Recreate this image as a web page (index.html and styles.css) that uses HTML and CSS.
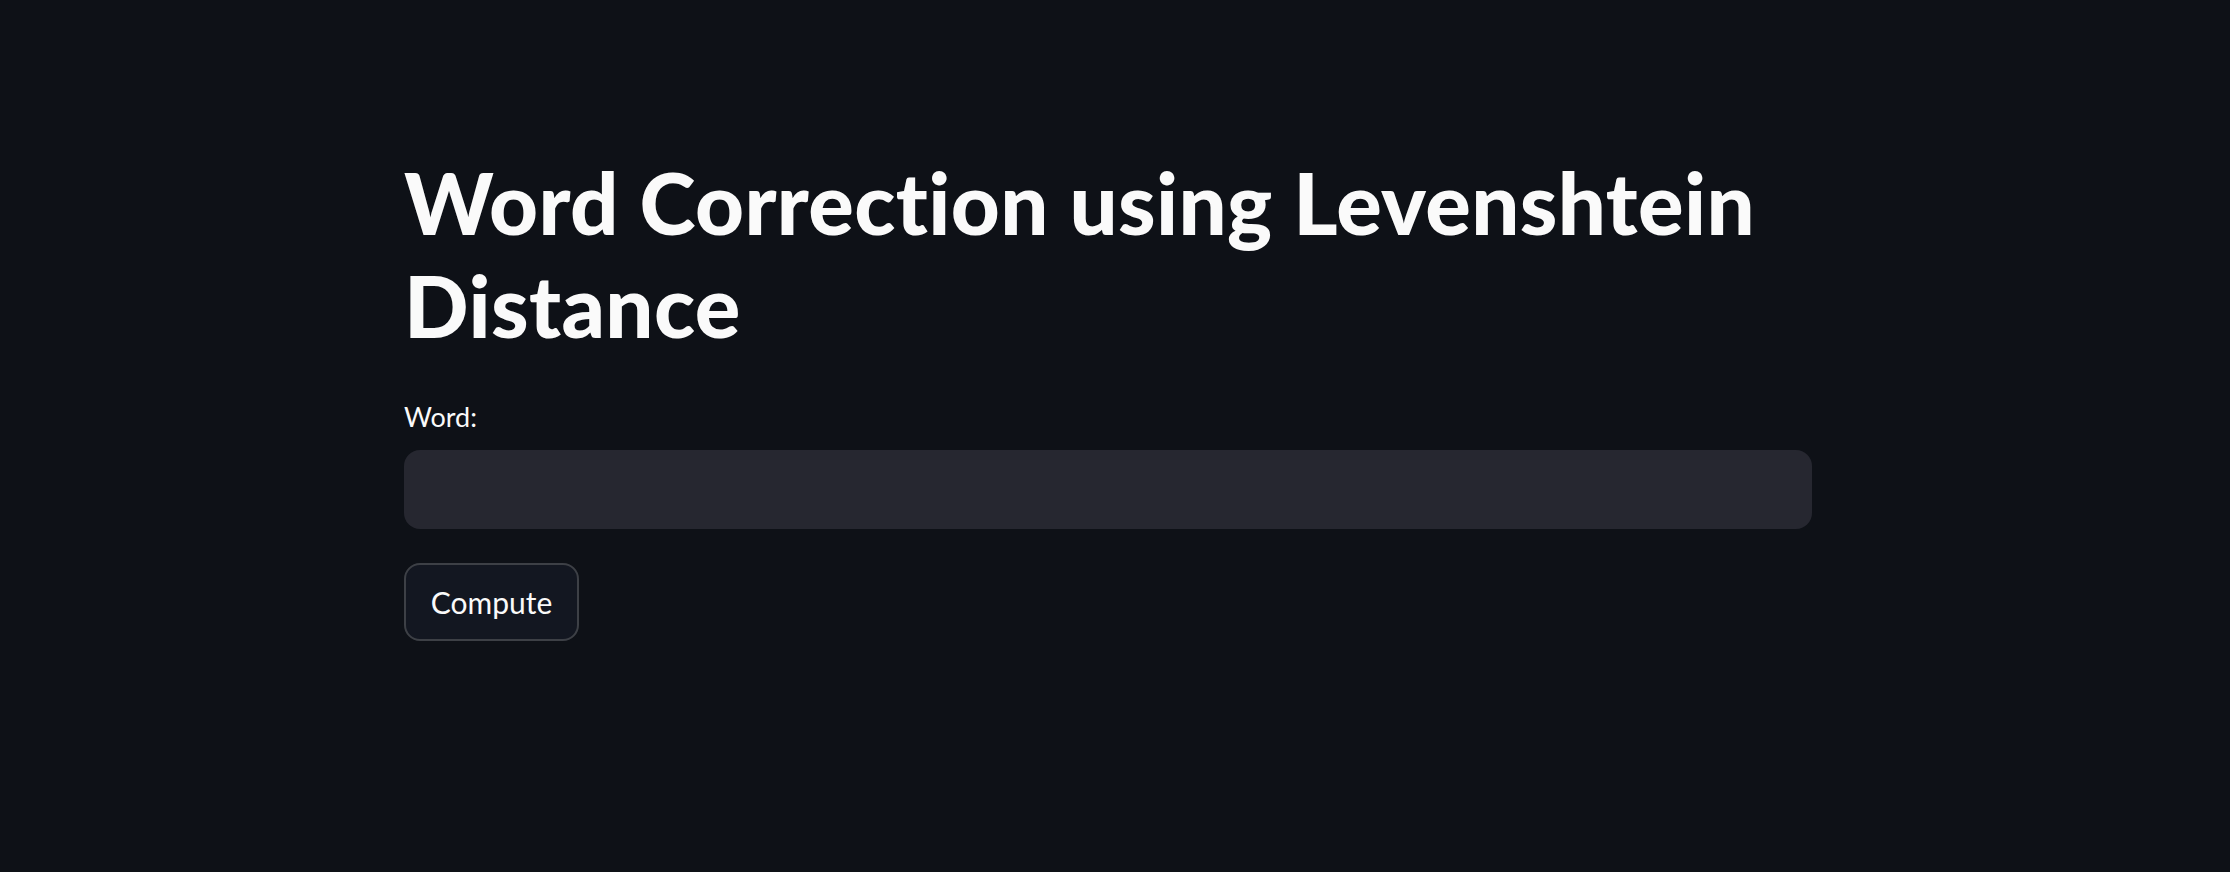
FILE: index.html
```html
<!DOCTYPE html>
<html lang="en">
<head>
<meta charset="utf-8">
<title>Word Correction using Levenshtein Distance</title>
<link rel="stylesheet" href="styles.css">
</head>
<body>
<main class="app">
  <section class="block">
    <h1 class="title">Word Correction using Levenshtein Distance</h1>
    <div class="field">
      <label class="label" for="word">Word:</label>
      <input class="input" id="word" type="text">
    </div>
    <button class="btn" type="button">Compute</button>
  </section>
</main>
</body>
</html>
```

FILE: styles.css
```css
html, body {
  margin: 0;
  padding: 0;
  background: #0e1117;
  color: #fafafa;
  font-family: Lato, "Noto Sans", sans-serif;
  font-variant-ligatures: none;
}

.app {
  min-height: 872px;
  box-sizing: border-box;
  padding: 151px 14px 0 0;
}

.block {
  width: 1408px;
  margin: 0 auto;
  display: flex;
  flex-direction: column;
  align-items: flex-start;
}

.title {
  margin: 0;
  font-size: 85px;
  line-height: 103px;
  font-weight: 900;
  letter-spacing: 0.4px;
  color: #fafafa;
}

.field {
  width: 100%;
  margin-top: 38px;
  display: flex;
  flex-direction: column;
}

.label {
  font-size: 27px;
  line-height: 44px;
  color: #fafafa;
}

.input {
  margin-top: 11px;
  height: 79px;
  box-sizing: border-box;
  border: none;
  border-radius: 16px;
  background: #262730;
  color: #fafafa;
  font: inherit;
  font-size: 32px;
  padding: 0 24px;
  outline: none;
}

.btn {
  margin-top: 34px;
  height: 78px;
  min-width: 175px;
  box-sizing: border-box;
  padding: 0 24px;
  border: 2px solid #3d4046;
  border-radius: 16px;
  background: #131721;
  color: #fafafa;
  font-family: inherit;
  font-size: 30px;
  line-height: 38px;
  display: flex;
  align-items: center;
  justify-content: center;
}
```
